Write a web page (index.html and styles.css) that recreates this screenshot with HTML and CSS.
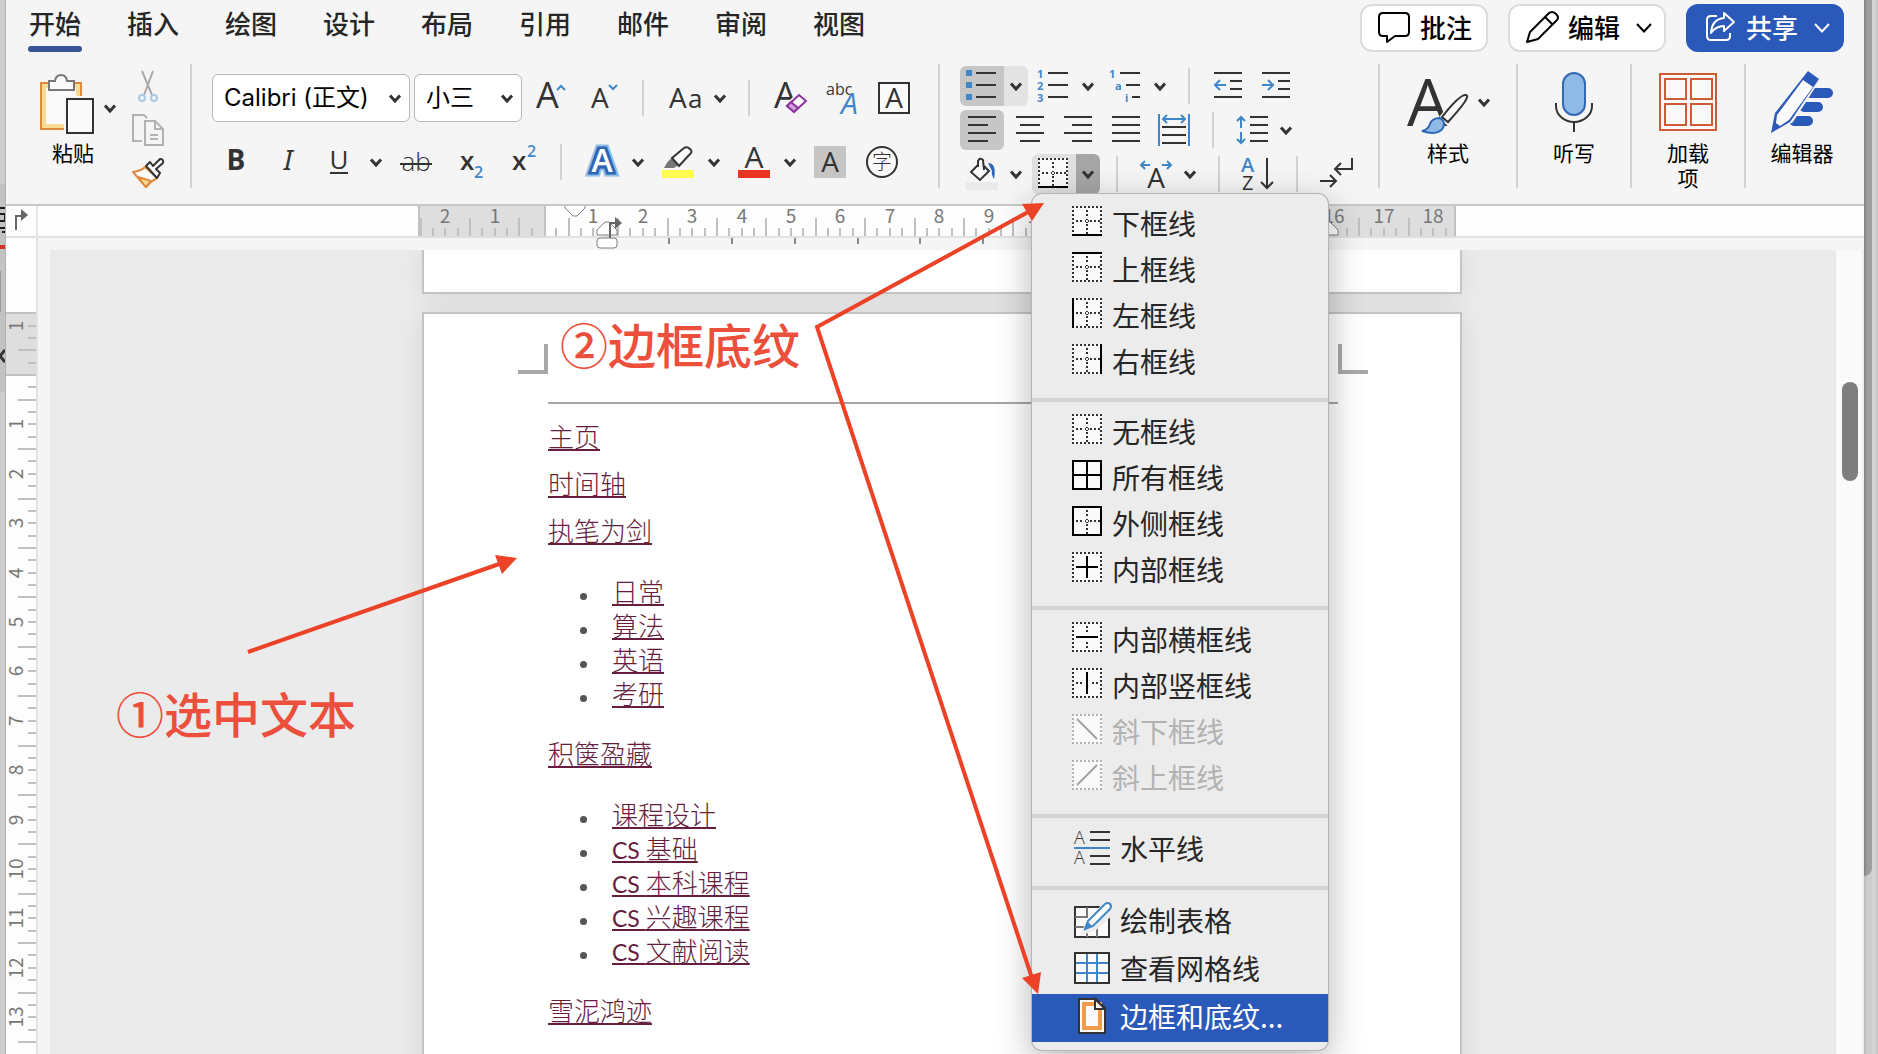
FILE: index.html
```html
<!DOCTYPE html>
<html lang="zh-CN">
<head>
<meta charset="utf-8">
<title>Word</title>
<link rel="stylesheet" href="styles.css">
</head>
<body>
<svg class="defs" aria-hidden="true">
  <defs>
    <symbol id="chev" viewBox="0 0 24 24"><path d="M7 9.500l5 5.500 5-5.500" fill="none" stroke="currentColor" stroke-width="3"/></symbol>
    <symbol id="chev-thin" viewBox="0 0 16 16"><path d="M1 5l7 7.500L15 5" fill="none" stroke="currentColor" stroke-width="2"/></symbol>
    <symbol id="frame" viewBox="0 0 30 30">
      <rect width="30" height="30" fill="#fafafa"/>
      <path d="M0 1H30M0 29H30M1 0V30M29 0V30" fill="none" stroke="currentColor" stroke-width="2" stroke-dasharray="2 2"/>
    </symbol>
    <symbol id="grid" viewBox="0 0 30 30">
      <use href="#frame"/>
      <path d="M4 15H12M18 15H28M15 4V12M15 18V28" fill="none" stroke="currentColor" stroke-width="2" stroke-dasharray="2 2"/>
      <path d="M15 13l2 2-2 2-2-2z" fill="none" stroke="currentColor"/>
    </symbol>
  </defs>
</svg>

<div class="edge edge-left" aria-hidden="true">
  <svg width="6" height="100%">
    <rect y="184" width="6" height="208" fill="#c2c2c2"/>
    <path d="M0 208H6M0 214H5V221H0M0 228H5M2 232H5" stroke="#1c1c1c" stroke-width="2" fill="none"/>
    <rect y="245" width="6" height="4" fill="#cf3422"/>
    <rect y="271" width="1" height="41" fill="#9a9a9a"/>
    <path d="M5 350L0 356 5 362" stroke="#333" stroke-width="3" fill="none"/>
    <rect x="5" y="751" width="1" height="36" fill="#4d4383"/>
  </svg>
</div>

<main class="window">
  <header class="topbar">
    <nav class="tabs">
      <a class="tab active" href="#">开始</a>
      <a class="tab" href="#">插入</a>
      <a class="tab" href="#">绘图</a>
      <a class="tab" href="#">设计</a>
      <a class="tab" href="#">布局</a>
      <a class="tab" href="#">引用</a>
      <a class="tab" href="#">邮件</a>
      <a class="tab" href="#">审阅</a>
      <a class="tab" href="#">视图</a>
    </nav>
    <div class="actions">
      <button class="action">
        <svg width="32" height="32" fill="none" stroke="currentColor" stroke-width="2" stroke-linejoin="round"><path d="M5 2H27Q31 2 31 6V21Q31 25 27 25H17L9 31V25H5Q1 25 1 21V6Q1 2 5 2Z"/></svg>
        批注
      </button>
      <button class="action wide">
        <svg width="32" height="32" fill="none" stroke="currentColor" stroke-width="2" stroke-linejoin="round"><path d="M1 31L4 21 22 3Q26-1 30 3T30 10L12 28ZM19 6L27 14"/></svg>
        编辑
        <svg class="end" width="16" height="16"><use href="#chev-thin"/></svg>
      </button>
      <button class="action wide primary">
        <svg width="32" height="32" fill="none" stroke="currentColor" stroke-width="2" stroke-linejoin="round"><path d="M13 5H7Q3 5 3 9V25Q3 29 7 29H22Q26 29 26 25V22M20 2L30 11 20 20V15Q12 15 7 22 8 8 20 7Z"/></svg>
        共享
        <svg class="end" width="16" height="16"><use href="#chev-thin"/></svg>
      </button>
    </div>
  </header>

  <section class="ribbon">
    <div class="group clipboard">
      <button class="big paste">
        <svg width="62" height="60" stroke-width="2">
          <rect x="-1" y="9" width="40" height="46" fill="#f6dd96" stroke="#e08a3c"/>
          <rect x="4" y="14" width="30" height="36" fill="#fafafa"/>
          <path d="M7 7H13C14-1 24-1 25 7H32V16H7Z" fill="#fafafa" stroke="#777"/>
          <rect x="22" y="22" width="20" height="36" fill="#f5f5f5"/>
          <rect x="25" y="25" width="26" height="34" fill="#fafafa" stroke="#333"/>
        </svg>
        粘贴
      </button>
      <button class="paste-more" aria-label="粘贴选项"><svg width="24" height="24"><use href="#chev"/></svg></button>
      <div class="clip-tools">
        <button aria-label="剪切"><svg width="32" height="32" fill="none" stroke-width="2"><path d="M10 1L20 25M21 1L12 25" stroke="#aaa"/><circle cx="10" cy="28" r="3" stroke="#a9cbe8"/><circle cx="22" cy="28" r="3" stroke="#a9cbe8"/></svg></button>
        <button aria-label="复制"><svg width="32" height="32" fill="none" stroke="#b2b2b2" stroke-width="2"><path d="M15 4L12 1H1V27H10M13 7H23L31 15V31H13ZM23 7V15H31M18 21H26M18 25H26"/></svg></button>
        <button aria-label="格式刷"><svg width="32" height="32" fill="#fafafa" stroke-width="2" stroke-linejoin="round"><path d="M1 14Q9 13 13 9L25 20Q19 23 14 29Z" stroke="#e08a3c"/><path d="M6 19L19 23 14 29Z" fill="#f6dd96" stroke="#e08a3c"/><path d="M14 8L18 4 21 8 28 1Q32 1 31 5L24 11 28 15 25 20Z" stroke="#333"/></svg></button>
      </div>
    </div>

    <div class="group font">
      <div class="row">
        <span class="picker name"><select aria-label="字体"><option>Calibri (正文)</option></select><svg width="24" height="24"><use href="#chev"/></svg></span>
        <span class="picker size"><select aria-label="字号"><option>小三</option></select><svg width="24" height="24"><use href="#chev"/></svg></span>
        <button class="cell" aria-label="增大字号"><svg width="48" height="48"><text x="10" y="34" class="t36">A</text><path class="blue" d="M31 16L35 12 39 16"/></svg></button>
        <button class="cell" aria-label="减小字号"><svg width="48" height="48"><text x="13" y="34" class="t28">A</text><path class="blue" d="M31 11L35 15 39 11"/></svg></button>
        <span class="bar"></span>
        <button class="cell join" aria-label="更改大小写"><svg width="48" height="48"><text x="9" y="34" class="t28">A</text><text x="28" y="34" class="t26">a</text></svg></button>
        <button class="more" aria-label="更多"><svg width="24" height="24"><use href="#chev"/></svg></button>
        <span class="bar"></span>
        <button class="cell" aria-label="清除格式"><svg width="48" height="48"><text x="8" y="34" class="t36">A</text><path d="M33 21L40 28 28 39 21 32Z" fill="#fafafa" stroke="#f5f5f5" stroke-width="5"/><path d="M33 21L40 27 28 38 21 32Z" fill="#fafafa" stroke="#8e319f" stroke-width="2"/><path d="M25 28L32 34 28 38 21 32Z" fill="#cfa3da" stroke="#8e319f" stroke-width="2"/></svg></button>
        <button class="cell" aria-label="拼音指南"><svg width="48" height="48"><text x="8" y="21" class="t16">abc</text><text x="23" y="40" class="t30 ital fblue">A</text></svg></button>
        <button class="cell" aria-label="字符边框"><svg width="48" height="48"><rect x="9" y="9" width="30" height="30" fill="#fafafa" stroke="#333" stroke-width="2"/><text x="24" y="34" class="t28 mid">A</text></svg></button>
      </div>
      <div class="row">
        <button class="cell" aria-label="加粗"><svg width="48" height="48"><text x="24" y="32" class="t28 mid bold">B</text></svg></button>
        <button class="cell" aria-label="倾斜"><svg width="48" height="48"><text x="24" y="32" class="t28 mid ital noto">I</text></svg></button>
        <button class="cell join" aria-label="下划线"><svg width="48" height="48"><text x="23" y="31" class="t26 mid">U</text><path d="M14 35H32" stroke="#333" stroke-width="2"/></svg></button>
        <button class="more" aria-label="更多"><svg width="24" height="24"><use href="#chev"/></svg></button>
        <button class="cell" aria-label="删除线"><svg width="48" height="48"><text x="24" y="33" class="t26 mid light">ab</text><path d="M8 26H40" stroke="#333" stroke-width="2"/></svg></button>
        <button class="cell" aria-label="下标"><svg width="48" height="48"><text x="16" y="32" class="t26 semi">x</text><text x="30" y="40" class="t16 semi fblue">2</text></svg></button>
        <button class="cell" aria-label="上标"><svg width="48" height="48"><text x="16" y="32" class="t26 semi">x</text><text x="31" y="19" class="t16 semi fblue">2</text></svg></button>
        <span class="bar"></span>
        <button class="cell join" aria-label="文本效果"><svg width="48" height="48"><text x="24" y="34" class="t32 mid bold glow">A</text><text x="24" y="34" class="t32 mid bold outline">A</text><text x="24" y="34" class="t32 mid semi inner">A</text></svg></button>
        <button class="more" aria-label="更多"><svg width="24" height="24"><use href="#chev"/></svg></button>
        <button class="cell join" aria-label="突出显示"><svg width="48" height="48"><path d="M10 30Q14 22 18 20L24 27 20 30Z" fill="#777"/><path d="M18 20L30 10Q33 8 36 11T36 16L25 28Z" fill="#fafafa" stroke="#333" stroke-width="2"/><rect x="8" y="32" width="32" height="8" fill="#fffd54"/></svg></button>
        <button class="more" aria-label="更多"><svg width="24" height="24"><use href="#chev"/></svg></button>
        <button class="cell join" aria-label="字体颜色"><svg width="48" height="48"><text x="24" y="30" class="t30 mid">A</text><rect x="8" y="32" width="32" height="8" fill="#ea3323"/></svg></button>
        <button class="more" aria-label="更多"><svg width="24" height="24"><use href="#chev"/></svg></button>
        <button class="cell" aria-label="字符底纹"><svg width="48" height="48"><rect x="8" y="8" width="32" height="32" fill="#c6c5c3"/><text x="24" y="34" class="t28 mid">A</text></svg></button>
        <button class="cell" aria-label="带圈字符"><svg width="48" height="48"><circle cx="24" cy="24" r="15" fill="#fafafa" stroke="#333" stroke-width="2"/><text x="24" y="31" class="cjk20 mid">字</text></svg></button>
      </div>
    </div>

    <div class="group para">
      <div class="row">
        <span class="split on">
          <button class="pc" aria-label="项目符号"><svg width="44" height="40"><path d="M6 4h6v6H6zM6 16h6v6H6zM6 28h6v6H6z" fill="#3f87c9"/><path class="ln" d="M16 7H36M16 19H36M16 31H36"/></svg></button>
          <button class="pm" aria-label="更多"><svg width="24" height="24"><use href="#chev"/></svg></button>
        </span>
        <span class="split">
          <button class="pc" aria-label="编号"><svg width="44" height="40"><text x="5" y="12" class="t11">1</text><text x="5" y="24" class="t11">2</text><text x="5" y="36" class="t11">3</text><path class="ln" d="M16 7H36M16 19H36M16 31H36"/></svg></button>
          <button class="pm" aria-label="更多"><svg width="24" height="24"><use href="#chev"/></svg></button>
        </span>
        <span class="split">
          <button class="pc" aria-label="多级列表"><svg width="44" height="40"><text x="5" y="12" class="t11">1</text><text x="11" y="24" class="t11">a</text><text x="21" y="36" class="t11">i</text><path class="ln" d="M16 7H36M22 19H36M28 31H36"/></svg></button>
          <button class="pm" aria-label="更多"><svg width="24" height="24"><use href="#chev"/></svg></button>
        </span>
        <span class="bar"></span>
        <button class="pc" aria-label="减少缩进"><svg width="44" height="40"><path class="ln" d="M8 7H36M24 15H36M24 23H36M8 31H36"/><path class="blue" d="M20 19H9M14 14L9 19 14 24"/></svg></button>
        <button class="pc" aria-label="增加缩进"><svg width="44" height="40"><path class="ln" d="M8 7H36M24 15H36M24 23H36M8 31H36"/><path class="blue" d="M8 19H19M14 14L19 19 14 24"/></svg></button>
      </div>
      <div class="row">
        <button class="pc on" aria-label="左对齐"><svg width="44" height="40"><path class="ln" d="M8 7H36M8 15H28M8 23H36M8 31H28"/></svg></button>
        <button class="pc" aria-label="居中"><svg width="44" height="40"><path class="ln" d="M8 7H36M12 15H32M8 23H36M12 31H32"/></svg></button>
        <button class="pc" aria-label="右对齐"><svg width="44" height="40"><path class="ln" d="M8 7H36M16 15H36M8 23H36M16 31H36"/></svg></button>
        <button class="pc" aria-label="两端对齐"><svg width="44" height="40"><path class="ln" d="M8 7H36M8 15H36M8 23H36M8 31H36"/></svg></button>
        <button class="pc" aria-label="分散对齐"><svg width="44" height="40"><path class="ln" d="M10 17H34M10 25H34M10 33H34"/><path class="blue" d="M7 4V36M37 4V36M11 9H33M15 5L11 9 15 13M29 5L33 9 29 13"/></svg></button>
        <span class="bar"></span>
        <span class="split">
          <button class="pc" aria-label="行距"><svg width="44" height="40"><path class="ln" d="M20 7H38M20 15H38M20 23H38M20 31H38"/><path class="blue" d="M11 18V7M7 11L11 7 15 11M11 22V33M7 29L11 33 15 29"/></svg></button>
          <button class="pm" aria-label="更多"><svg width="24" height="24"><use href="#chev"/></svg></button>
        </span>
      </div>
      <div class="row">
        <span class="split">
          <button class="pc" aria-label="底纹"><svg width="44" height="40"><path d="M28 9Q37 9 34 25 31 20 32 17Z" fill="#2c66b5"/><path d="M18 11L11 18 20 26 29 17 24 12M18 13V7Q20 3 23 6L24 16" fill="#fafafa" stroke="#333" stroke-width="2"/><rect x="6" y="28" width="32" height="8" fill="#ebebeb"/></svg></button>
          <button class="pm" aria-label="更多"><svg width="24" height="24"><use href="#chev"/></svg></button>
        </span>
        <span class="split open">
          <button class="pc" aria-label="边框"><svg width="44" height="40"><svg x="6" y="4" width="30" height="30"><use href="#grid"/><path d="M0 29H30" stroke="#000" stroke-width="2"/></svg></svg></button>
          <button class="pm" aria-label="边框选项" aria-expanded="true"><svg width="24" height="24"><use href="#chev"/></svg></button>

          <div class="menu" role="menu">
            <button class="item" role="menuitem"><svg width="30" height="30"><use href="#grid"/><path d="M0 28H30V30H0z"/></svg>下框线</button>
            <button class="item" role="menuitem"><svg width="30" height="30"><use href="#grid"/><path d="M0 0H30V2H0z"/></svg>上框线</button>
            <button class="item" role="menuitem"><svg width="30" height="30"><use href="#grid"/><path d="M0 0H2V30H0z"/></svg>左框线</button>
            <button class="item" role="menuitem"><svg width="30" height="30"><use href="#grid"/><path d="M28 0H30V30H28z"/></svg>右框线</button>
            <hr>
            <button class="item" role="menuitem"><svg width="30" height="30"><use href="#grid"/></svg>无框线</button>
            <button class="item" role="menuitem"><svg width="30" height="30"><path d="M1 1H29V29H1ZM1 15H29M15 1V29" fill="#fafafa" stroke="#000" stroke-width="2"/></svg>所有框线</button>
            <button class="item" role="menuitem"><svg width="30" height="30"><use href="#grid"/><path d="M1 1H29V29H1Z" fill="none" stroke="#000" stroke-width="2"/></svg>外侧框线</button>
            <button class="item" role="menuitem"><svg width="30" height="30"><use href="#frame"/><path d="M4 15H26M15 4V26" stroke="#000" stroke-width="2"/></svg>内部框线</button>
            <hr>
            <button class="item" role="menuitem"><svg width="30" height="30"><use href="#frame"/><path d="M15 4V10M15 20V26" stroke="#333" stroke-width="2" stroke-dasharray="2 2"/><path d="M4 15H26" stroke="#000" stroke-width="2"/></svg>内部横框线</button>
            <button class="item" role="menuitem"><svg width="30" height="30"><use href="#frame"/><path d="M4 15H10M20 15H26" stroke="#333" stroke-width="2" stroke-dasharray="2 2"/><path d="M15 4V26" stroke="#000" stroke-width="2"/></svg>内部竖框线</button>
            <button class="item" role="menuitem" disabled><svg width="30" height="30"><use href="#frame"/><path d="M5 5L25 25" stroke="#a0a0a0" stroke-width="2"/></svg>斜下框线</button>
            <button class="item" role="menuitem" disabled><svg width="30" height="30"><use href="#frame"/><path d="M5 25L25 5" stroke="#a0a0a0" stroke-width="2"/></svg>斜上框线</button>
            <hr>
            <button class="item tall" role="menuitem"><svg width="38" height="36"><text x="0" y="14" class="t18 light">A</text><text x="0" y="34" class="t18 light">A</text><path class="ln" d="M16 2H36M16 10H36M16 26H36M16 34H36"/><path d="M0 18H36" stroke="#3f87c9" stroke-width="2"/></svg>水平线</button>
            <hr>
            <button class="item tall" role="menuitem"><svg width="38" height="36"><path d="M1 5H35V35H1Z" fill="#fafafa" stroke="#333" stroke-width="2"/><path d="M1 15H13V5M1 25H12M13 35V26M23 35V24" fill="none" stroke="#777" stroke-width="2"/><path d="M6 34L12 20 30 0H40V12L22 28Z" fill="#ececec"/><path d="M11 27L14 19 31 2Q34 0 36 2T36 7L19 24Z" fill="#fafafa" stroke="#3f87c9" stroke-width="2"/><path d="M11 28L14 20 18 24Z" fill="#3f87c9"/></svg>绘制表格</button>
            <button class="item tall" role="menuitem"><svg width="38" height="36"><rect x="1" y="3" width="34" height="30" fill="#fafafa"/><path d="M13 3V33M23 3V33M1 13H35M1 23H35" stroke="#3f87c9" stroke-width="2"/><rect x="1" y="3" width="34" height="30" fill="none" stroke="#333" stroke-width="2"/></svg>查看网格线</button>
            <button class="item tall selected" role="menuitem"><svg width="38" height="36"><path d="M5 1H22L31 10V35H5Z" fill="#fafafa" stroke="#333" stroke-width="2"/><path d="M10 6H26V30H10Z" fill="#fafafa" stroke="#ee9d4c" stroke-width="4"/><path d="M21 1V11H31Z" fill="#fafafa" stroke="#333" stroke-width="2"/></svg>边框和底纹...</button>
          </div>
        </span>
        <span class="bar"></span>
        <span class="split">
          <button class="pc" aria-label="中文版式"><svg width="44" height="40"><text x="22" y="34" class="t28 mid">A</text><path class="blue" d="M16 11H7M11 7L7 11 11 15M28 11H37M33 7L37 11 33 15"/></svg></button>
          <button class="pm" aria-label="更多"><svg width="24" height="24"><use href="#chev"/></svg></button>
        </span>
        <span class="bar"></span>
        <button class="pc" aria-label="排序"><svg width="44" height="40"><text x="5" y="18" class="t20 semi fblue">A</text><text x="6" y="36" class="t20">Z</text><path class="ln" d="M31 4V34M25 28L31 34 37 28"/></svg></button>
        <span class="bar"></span>
        <button class="pc" aria-label="编辑标记"><svg width="44" height="40"><path class="ln" d="M38 4V15H22M27 9L21 15 27 21M6 27H22M16 21L22 27 16 33"/></svg></button>
      </div>
    </div>

    <div class="group styles">
      <button class="big">
        <svg width="88" height="60"><text x="3" y="52" class="t66">A</text><path d="M62 21Q65 24 44 48L39 43Q58 19 62 21Z" fill="#fafafa" stroke="#f5f5f5" stroke-width="6"/><path d="M62 21Q68 22 44 48L38 43Q56 20 62 21Z" fill="#fafafa" stroke="#333" stroke-width="2"/><path d="M18 57Q24 56 26 50T36 44Q42 48 39 54 34 62 18 57Z" fill="#8fbae6" stroke="#2c66b5" stroke-width="2"/><svg class="drop" x="68" y="16" width="24" height="24"><use href="#chev"/></svg></svg>
        样式
      </button>
    </div>
    <div class="group tool">
      <button class="big">
        <svg width="60" height="60" stroke-width="2"><rect x="19" y="-1" width="22" height="42" rx="11" fill="#8fbae6" stroke="#2f6ab3"/><path d="M12 29V32A18 16 0 0 0 48 32V29M30 48V58" fill="none" stroke="#333"/></svg>
        听写
      </button>
    </div>
    <div class="group tool">
      <button class="big narrow">
        <svg width="60" height="60" fill="#fafafa" stroke="#cf5a36" stroke-width="2"><rect x="2" y="0" width="56" height="56"/><path d="M7 5H28V25H7ZM33 5H54V25H33ZM7 30H28V51H7ZM33 30H54V51H33Z"/></svg>
        加载项
      </button>
    </div>
    <div class="group tool">
      <button class="big">
        <svg width="60" height="60"><path d="M38 19H56M32 33H46M22 47H36" stroke="#2b59b9" stroke-width="10" stroke-linecap="round"/><path d="M36-3L47 5 20 47 0 59 2 40Z" fill="#2b59b9" stroke="#f5f5f5" stroke-width="3"/><path d="M36-3L47 5 18 48-1 59 3 39Z" fill="#2b59b9"/><path d="M31 6L41 13 17 46 8 52 4 49 5 41Z" fill="#fafafa"/></svg>
        编辑器
      </button>
    </div>
  </section>

  <div class="hruler">
    <div class="corner"><svg width="30" height="30"><path d="M10 24V10H18" fill="none" stroke="#666" stroke-width="2"/><path d="M15 3L22 9 15 15Z" fill="#666"/></svg></div>
    <svg id="hscale" class="hscale"></svg>
  </div>

  <div class="workspace">
    <svg id="vscale" class="vscale"></svg>
    <div class="document">
      <article class="page previous"></article>
      <article class="page current" id="page">
        <div class="crop"><i class="mark left"></i><i class="mark right"></i></div>
        <div class="content">
          <hr>
          <p><a href="#">主页</a></p>
          <p><a href="#">时间轴</a></p>
          <p><a href="#">执笔为剑</a></p>
          <ul>
            <li><a href="#">日常</a></li>
            <li><a href="#">算法</a></li>
            <li><a href="#">英语</a></li>
            <li><a href="#">考研</a></li>
          </ul>
          <p><a href="#">积箧盈藏</a></p>
          <ul>
            <li><a href="#">课程设计</a></li>
            <li><a href="#"><span class="latin">CS </span>基础</a></li>
            <li><a href="#"><span class="latin">CS </span>本科课程</a></li>
            <li><a href="#"><span class="latin">CS </span>兴趣课程</a></li>
            <li><a href="#"><span class="latin">CS </span>文献阅读</a></li>
          </ul>
          <p><a href="#">雪泥鸿迹</a></p>
        </div>
      </article>
    </div>
    <div class="scroll"><div class="thumb"></div></div>
  </div>
</main>

<div class="edge edge-right" aria-hidden="true"><div class="back-window"></div></div>

<svg class="annotations" aria-hidden="true">
  <path d="M1030 211L817 327 1032 978M248 652L502 563" fill="none" stroke="#ec4227" stroke-width="4"/>
  <path d="M1044 203L1022 204 1032 221ZM1038 994L1022 978 1041 972ZM517 558L495 555 502 574Z" fill="#ec4227"/>
</svg>
<p class="note first">①选中文本</p>
<p class="note second">②边框底纹</p>
<script src="rulers.js"></script>
</body>
</html>
```
FILE: styles.css
```css
* { box-sizing: border-box; }

body {
  margin: 0;
  height: 100vh;
  display: flex;
  position: relative;
  overflow: hidden;
  background: #cacaca;
  color: #000;
  font-family: "Noto Sans CJK SC", sans-serif;
}

button {
  margin: 0;
  padding: 0;
  border: 0;
  background: none;
  color: inherit;
  font: inherit;
}

svg { display: block; flex: none; overflow: visible; }
.defs { position: absolute; width: 0; height: 0; }

.edge { flex: none; overflow: hidden; }
.edge-left { width: 6px; background: #cecece; border-right: 1px solid #b0b0b0; }
.edge-right { width: 14px; background: linear-gradient(90deg, #b8b8b8, #cdcdcd 3px, #cdcdcd 8px, #d4d4d4 8px, #d4d4d4 12px, #c6c6c6 12px); }
.back-window {
  width: 8px;
  height: 876px;
  background: linear-gradient(90deg, #808080, #9c9c9c 3px, #a0a0a0);
  border-radius: 0 0 8px 0;
}

.window {
  flex: 1;
  min-width: 0;
  display: flex;
  flex-direction: column;
  background: #f5f5f5;
}

/* tabs and top buttons */
.topbar {
  flex: none;
  height: 58px;
  padding: 4px 20px 0 22px;
  display: flex;
  justify-content: space-between;
}
.tabs { display: flex; gap: 44px; }
.tab {
  width: 54px;
  height: 48px;
  line-height: 38px;
  text-align: center;
  color: #262626;
  font-size: 26px;
  font-weight: 500;
  text-decoration: none;
  white-space: nowrap;
}
.tab.active::after {
  content: "";
  display: block;
  height: 6px;
  margin-top: 4px;
  border-radius: 3px;
  background: #355596;
}
.actions { display: flex; gap: 20px; }
.action {
  width: 128px;
  height: 48px;
  padding: 0 16px 2px;
  display: flex;
  align-items: center;
  gap: 10px;
  border: 2px solid #dcdcdc;
  border-radius: 12px;
  background: #fff;
  font-size: 26px;
  font-weight: 500;
  line-height: 40px;
  white-space: nowrap;
}
.action.wide { width: 158px; }
.action.primary { background: #2b59b9; border-color: #2b59b9; color: #fff; }
.action .end { margin-left: 6px; }

/* ribbon */
.ribbon {
  flex: none;
  height: 148px;
  padding-top: 6px;
  display: flex;
  border-bottom: 2px solid #c8c8c8;
}
.group { flex: none; height: 124px; color: #333; }
.group + .group { border-left: 2px solid #d2d2d2; }
.row { display: flex; align-items: center; gap: 4px; }

.clipboard { padding: 6px 26px 0 36px; display: flex; }
.big {
  display: flex;
  flex-direction: column;
  align-items: center;
  gap: 6px;
  margin-top: 4px;
  width: 88px;
  font-size: 21px;
  line-height: 25px;
  color: #000;
}
.big.paste { width: 62px; }
.big.narrow { width: 60px; padding: 0 6px; }
.big .drop { color: #333; }
.paste-more { width: 12px; height: 24px; margin: 26px 16px 0 0; display: flex; justify-content: center; }
.clip-tools { display: flex; flex-direction: column; gap: 12px; }

.font { padding: 10px 20px 0; display: flex; flex-direction: column; gap: 16px; }
.picker { position: relative; }
.picker.name { width: 198px; }
.picker.size { width: 108px; }
.picker select {
  appearance: none;
  display: block;
  width: 100%;
  height: 48px;
  padding: 0 0 2px 11px;
  border: 1px solid #b8b8b8;
  border-radius: 6px;
  background: #fff;
  color: #000;
  font-family: Inter, "Noto Sans CJK SC", sans-serif;
  font-size: 24px;
}
.picker svg { position: absolute; right: 3px; top: 12px; pointer-events: none; }
.cell { width: 48px; height: 48px; }
.more { width: 24px; height: 48px; display: flex; align-items: center; }
.join { margin-right: -4px; }
.bar { width: 2px; height: 36px; margin: 0 12px; background: #d2d2d2; }

.para { padding: 2px 20px 0; display: flex; flex-direction: column; gap: 4px; }
.para .row { height: 40px; }
.split { display: flex; position: relative; }
.pc { width: 44px; height: 40px; }
.pm { width: 24px; height: 40px; display: flex; align-items: center; }
.pc.on { background: #c6c6c6; border-radius: 6px; }
.split.on .pc { background: #c6c6c6; border-radius: 6px 0 0 6px; }
.split.on .pm { background: #e3e3e3; border-radius: 0 6px 6px 0; }
.split.open > .pc { background: #e0e0e0; border-radius: 6px 0 0 6px; }
.split.open > .pm { background: #a6a6a6; border-radius: 0 6px 6px 0; }

.styles { width: 138px; padding: 6px 24px 0; }
.tool { width: 114px; padding-top: 6px; display: flex; justify-content: center; align-items: flex-start; }

/* lettering and strokes inside icons */
svg text { font-family: "Open Sans", "Noto Sans", sans-serif; fill: #333; }
svg .t66 { font-size: 66px; }
svg .t36 { font-size: 36px; }
svg .t32 { font-size: 32px; }
svg .t30 { font-size: 30px; }
svg .t28 { font-size: 28px; }
svg .t26 { font-size: 26px; }
svg .t20 { font-size: 20px; }
svg .t18 { font-size: 18px; }
svg .t16 { font-size: 16px; }
svg .t11 { font-size: 11px; font-weight: 700; fill: #3f87c9; }
svg .cjk20 { font-family: "Noto Sans CJK SC", sans-serif; font-size: 20px; font-weight: 300; }
svg .noto { font-family: "Noto Sans", sans-serif; }
svg .mid { text-anchor: middle; }
svg .bold { font-weight: 700; }
svg .semi { font-weight: 600; }
svg .light { font-weight: 300; }
svg .ital { font-style: italic; }
svg .fblue { fill: #3f87c9; }
svg .glow { stroke: #92bfe8; stroke-width: 9px; }
svg .outline { stroke: #2c66b5; stroke-width: 5px; }
svg .inner { fill: #fff; }
.blue { fill: none; stroke: #3f87c9; stroke-width: 2; }
.ln { fill: none; stroke: #333; stroke-width: 2; }

/* borders menu */
.menu {
  position: absolute;
  left: 0;
  top: 100%;
  z-index: 10;
  width: 296px;
  padding: 8px 0;
  background: #ececec;
  border-radius: 10px;
  box-shadow: 0 0 0 1px #b4b4b4, 0 10px 36px rgba(0, 0, 0, .3);
}
.menu hr { height: 4px; margin: 12px 0 8px; border: 0; background: #d4d4d4; }
.item {
  width: 100%;
  height: 46px;
  padding: 0 0 4px 40px;
  display: flex;
  align-items: center;
  gap: 10px;
  color: #262626;
  font-size: 28px;
  line-height: 40px;
  text-align: left;
  white-space: nowrap;
}
.item svg { margin-bottom: 4px; color: #333; }
.item:disabled { color: #b2b2b2; }
.item:disabled svg { color: #b2b2b2; }
.item.tall { height: 48px; padding-left: 42px; gap: 8px; }
.item.tall svg { margin-bottom: 0; }
.item.selected { background: #2b59b9; color: #fff; }

/* rulers */
.hruler {
  flex: none;
  height: 32px;
  display: flex;
  background: #fdfdfd;
  border-bottom: 2px solid #e2e2e2;
}
.corner { width: 32px; border-right: 2px solid #e6e6e6; }
.hscale { flex: 1; height: 30px; }
.vscale { width: 32px; height: 100%; background: #fdfdfd; border-right: 2px solid #e2e2e2; overflow: hidden; }
.hscale text, .vscale text {
  font-family: "Noto Sans CJK SC", sans-serif;
  font-size: 19px;
  fill: #777;
  text-anchor: middle;
}
.tick { stroke: #c0c0c0; stroke-width: 2; }
.stop { stroke: #8a8a8a; stroke-width: 2; }
.zone { fill: #dedede; }
.zone-edge { stroke: #c2c2c2; stroke-width: 2; }
.marker { fill: #fff; stroke: #808080; stroke-width: 1; }

/* document */
.workspace { flex: 1; min-height: 0; display: flex; }
.document {
  flex: 1;
  min-width: 0;
  margin: 12px 0 0 12px;
  overflow: hidden;
  display: flex;
  flex-direction: column;
  align-items: center;
  gap: 18px;
  background: #ebebeb;
}
.page {
  flex: none;
  width: 1040px;
  background: #fff;
  border: 2px solid #c4c4c4;
  box-shadow: 0 0 26px rgba(0, 0, 0, .09);
}
.previous { height: 44px; border-top: 0; }
.current { min-height: 1470px; padding: 30px 92px 0 94px; }
.crop { display: flex; justify-content: space-between; }
.mark { width: 30px; height: 30px; border: 0 solid #a8a8a8; border-bottom-width: 4px; }
.mark.left { border-right-width: 4px; }
.mark.right { border-left-width: 4px; }
.content { margin: 28px 30px 0; font-size: 26px; line-height: 34px; font-weight: 300; }
.content hr { height: 2px; margin: 0 0 15px; border: 0; background: #a6a6a6; }
.content p { margin: 0 0 13px; }
.content ul { margin: 27px 0 26px; padding: 0; list-style: none; }
.content li { display: flex; align-items: center; padding-left: 32px; gap: 25px; }
.content li::before { content: ""; width: 7px; height: 7px; margin-top: 10px; border-radius: 50%; background: #555; }
.content a {
  color: #651e3e;
  text-decoration: underline;
  text-decoration-thickness: 2px;
  text-decoration-skip-ink: none;
  text-underline-offset: 2px;
}
.latin { font-family: Lato, sans-serif; font-size: 23px; font-weight: 400; line-height: 1; white-space: pre; }

.scroll {
  flex: none;
  width: 30px;
  margin-top: 12px;
  padding: 132px 4px 0 6px;
  background: #fafafa;
  border-left: 2px solid #e8e8e8;
  border-right: 2px solid #f0f0f0;
}
.thumb { width: 16px; height: 99px; border-radius: 8px; background: #7e7e7e; }

/* tutorial marks over the window */
.annotations { position: absolute; left: 0; top: 0; width: 100%; height: 100%; z-index: 20; pointer-events: none; }
.note {
  position: absolute;
  z-index: 20;
  margin: 0;
  color: #ec4f3c;
  font-size: 48px;
  line-height: 60px;
  font-weight: 500;
  white-space: nowrap;
}
.note.first { left: 116px; top: 682px; }
.note.second { left: 560px; top: 313px; }
```
FILE: rulers.js
```js
(function () {
  var UNIT = 49.4;

  function line(cls, x1, y1, x2, y2) {
    return '<line class="' + cls + '" x1="' + x1 + '" y1="' + y1 + '" x2="' + x2 + '" y2="' + y2 + '"/>';
  }

  function horizontal() {
    var svg = document.getElementById('hscale');
    var page = document.getElementById('page').getBoundingClientRect();
    var left = Math.round(page.left - svg.getBoundingClientRect().left) - 4;
    var origin = left + 126;
    var end = left + 1038;
    var out = '<rect class="zone" x="' + left + '" y="0" width="128" height="32"/>' +
      '<rect class="zone" x="' + (end - 130) + '" y="0" width="130" height="32"/>' +
      line('zone-edge', left + 1, 0, left + 1, 30) + line('zone-edge', left + 127, 0, left + 127, 30) +
      line('zone-edge', end - 1, 0, end - 1, 30);
    for (var q = -10; q <= 73; q++) {
      var x = Math.round(origin + q * UNIT / 4);
      if (q === 0) continue;
      out += line('tick', x, q % 4 !== 0 && q % 2 === 0 ? 12 : 22, x, 30);
      if (q % 4 === 0) out += '<text x="' + x + '" y="17">' + Math.abs(q / 4) + '</text>';
    }
    for (var s = 2; s <= 7; s++) {
      var t = Math.round(origin + s * 62.7);
      out += line('stop', t, 32, t, 38);
    }
    var i = origin + 31, h = origin + 63, r = end - 128;
    out += '<path class="marker" d="M' + (i - 10) + ' 0v2l8 8h4l8-8v-2"/>' +
      '<path class="marker" d="M' + (h - 10) + ' 29v-5l8-8h4l8 8v5z"/>' +
      '<rect class="marker" x="' + (h - 10) + '" y="32" width="20" height="10" rx="3"/>' +
      '<path class="marker" d="M' + (r - 10) + ' 29v-5l8-8h4l8 8v5z"/>' +
      '<path d="M' + (h + 3) + ' 32V17H' + (h + 9) + '" fill="none" stroke="#666" stroke-width="2"/>' +
      '<path d="M' + (h + 8) + ' 11l7 6-7 6z" fill="#666"/>';
    svg.innerHTML = out;
  }

  function vertical() {
    var svg = document.getElementById('vscale');
    var origin = 137;
    var last = Math.floor((svg.getBoundingClientRect().height - origin) * 4 / UNIT);
    var out = '<rect class="zone" x="0" y="74" width="30" height="63"/>' +
      line('zone-edge', 0, 75, 30, 75) + line('zone-edge', 0, 137, 30, 137);
    for (var q = -4; q <= last; q++) {
      var y = Math.round(origin + q * UNIT / 4);
      if (q === 0) continue;
      out += line('tick', q % 4 !== 0 && q % 2 === 0 ? 12 : 22, y, 30, y);
      if (q % 4 === 0) out += '<text transform="translate(17 ' + y + ') rotate(-90)">' + Math.abs(q / 4) + '</text>';
    }
    svg.innerHTML = out;
  }

  function draw() {
    horizontal();
    vertical();
  }

  draw();
  window.addEventListener('resize', draw);
})();
```
